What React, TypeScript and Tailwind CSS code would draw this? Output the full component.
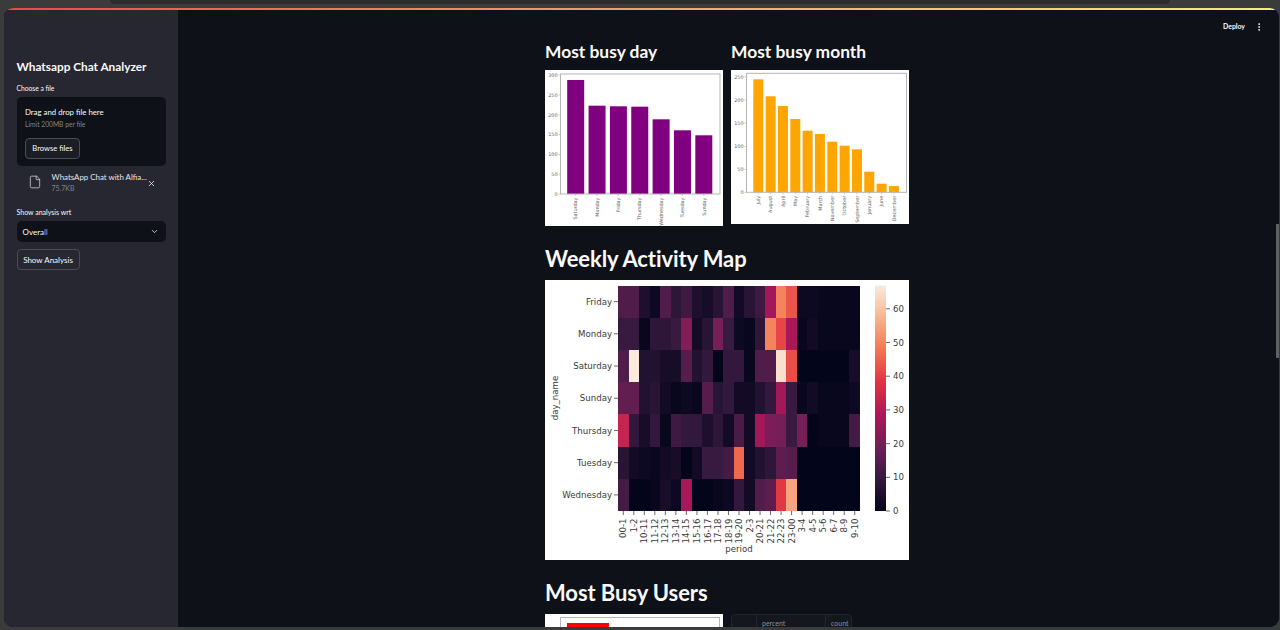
import React from 'react';
import { ChevronDown, EllipsisVertical, File, X } from 'lucide-react';

const UI_FONT = 'Lato, "Noto Sans", sans-serif';
const PLOT_FONT = '"DejaVu Sans", sans-serif';

// rocket colormap stops
const ROCKET = ['#03051a', '#35193e', '#701f57', '#ad1759', '#e13342', '#f37651', '#f6b48f', '#faebdd'];
const HEAT_MAX = 67;

const rocket = (value: number): string => {
  const t = Math.min(value / HEAT_MAX, 1) * (ROCKET.length - 1);
  const i = Math.min(Math.floor(t), ROCKET.length - 2);
  const f = t - i;
  const parse = (hex: string) => [1, 3, 5].map(p => parseInt(hex.slice(p, p + 2), 16));
  const a = parse(ROCKET[i]);
  const b = parse(ROCKET[i + 1]);
  return `rgb(${a.map((c, k) => Math.round(c + (b[k] - c) * f)).join(',')})`;
};

const DAYS = ['Friday', 'Monday', 'Saturday', 'Sunday', 'Thursday', 'Tuesday', 'Wednesday'];
const PERIODS = ['00-1', '1-2', '10-11', '11-12', '12-13', '13-14', '14-15', '15-16', '16-17', '17-18', '18-19', '19-20', '2-3', '20-21', '21-22', '22-23', '23-00', '3-4', '4-5', '5-6', '6-7', '8-9', '9-10'];
const HEAT = [
  [14, 14, 5, 2, 14, 8, 11, 5, 4, 7, 14, 3, 7, 11, 27, 50, 43, 2, 2, 1, 1, 1, 1],
  [10, 10, 1, 8, 8, 10, 22, 3, 7, 20, 10, 2, 1, 8, 50, 41, 28, 1, 3, 1, 1, 1, 1],
  [14, 67, 6, 6, 4, 4, 15, 6, 9, 0, 9, 9, 1, 14, 14, 65, 42, 0, 0, 0, 0, 0, 4],
  [17, 17, 6, 7, 3, 1, 2, 1, 15, 7, 9, 3, 3, 6, 9, 27, 10, 1, 3, 1, 1, 1, 2],
  [33, 9, 4, 9, 1, 11, 9, 9, 5, 8, 3, 13, 3, 27, 21, 20, 10, 20, 0, 1, 1, 1, 12],
  [7, 3, 2, 1, 3, 4, 0, 3, 10, 10, 12, 46, 3, 6, 8, 16, 15, 0, 0, 0, 0, 0, 0],
  [12, 0, 0, 1, 4, 2, 28, 0, 0, 1, 2, 9, 3, 14, 16, 39, 55, 0, 0, 0, 0, 0, 0],
];

interface Bar {
  label: string;
  top: number;
}

interface BarChartProps {
  width: number;
  height: number;
  color: string;
  axes: { left: number; right: number; top: number; bottom: number };
  ticks: { label: string; y: number }[];
  firstX: number;
  stepX: number;
  barWidth: number;
  bars: Bar[];
}

const BarChart: React.FC<BarChartProps> = ({ width, height, color, axes, ticks, firstX, stepX, barWidth, bars }) => (
  <svg width={width} height={height} className="block bg-white" style={{ fontFamily: PLOT_FONT }}>
    {bars.map((bar, i) => {
      const cx = firstX + stepX * i;
      return (
        <g key={bar.label}>
          <rect x={cx - barWidth / 2} y={bar.top} width={barWidth} height={axes.bottom - bar.top} fill={color} />
          <line x1={cx} x2={cx} y1={axes.bottom} y2={axes.bottom + 2} stroke="#999" strokeWidth={0.5} />
          <text
            transform={`translate(${cx + 1.7} ${axes.bottom + 3.5}) rotate(-90)`}
            textAnchor="end"
            fontSize={4.9}
            fill="#666"
          >
            {bar.label}
          </text>
        </g>
      );
    })}
    {ticks.map(t => (
      <g key={t.label}>
        <line x1={axes.left - 2} x2={axes.left} y1={t.y} y2={t.y} stroke="#999" strokeWidth={0.5} />
        <text x={axes.left - 3} y={t.y + 1.7} textAnchor="end" fontSize={4.9} fill="#666">
          {t.label}
        </text>
      </g>
    ))}
    <rect
      x={axes.left}
      y={axes.top}
      width={axes.right - axes.left}
      height={axes.bottom - axes.top}
      fill="none"
      stroke="#b5b5b5"
      strokeWidth={1}
    />
  </svg>
);

const DayChart = () => (
  <BarChart
    width={178}
    height={156}
    color="#800080"
    axes={{ left: 15.5, right: 175, top: 4, bottom: 124 }}
    ticks={[
      { label: '300', y: 5 },
      { label: '250', y: 25 },
      { label: '200', y: 45 },
      { label: '150', y: 64.5 },
      { label: '100', y: 84.5 },
      { label: '50', y: 104 },
      { label: '0', y: 124 },
    ]}
    firstX={30.7}
    stepX={21.35}
    barWidth={17}
    bars={[
      { label: 'Saturday', top: 10 },
      { label: 'Monday', top: 35.7 },
      { label: 'Friday', top: 36.3 },
      { label: 'Thursday', top: 36.7 },
      { label: 'Wednesday', top: 49.3 },
      { label: 'Tuesday', top: 60.3 },
      { label: 'Sunday', top: 65.3 },
    ]}
  />
);

const MonthChart = () => (
  <BarChart
    width={178}
    height={154}
    color="#ffa500"
    axes={{ left: 15.5, right: 175.5, top: 3.3, bottom: 122.3 }}
    ticks={[
      { label: '250', y: 7 },
      { label: '200', y: 30 },
      { label: '150', y: 53 },
      { label: '100', y: 76.5 },
      { label: '50', y: 99.5 },
      { label: '0', y: 122.3 },
    ]}
    firstX={27.3}
    stepX={12.33}
    barWidth={10}
    bars={[
      { label: 'July', top: 9.3 },
      { label: 'August', top: 26.3 },
      { label: 'April', top: 36 },
      { label: 'May', top: 49 },
      { label: 'February', top: 60.7 },
      { label: 'March', top: 64 },
      { label: 'November', top: 71.7 },
      { label: 'October', top: 75.7 },
      { label: 'September', top: 79.3 },
      { label: 'January', top: 101.7 },
      { label: 'June', top: 113.7 },
      { label: 'December', top: 116 },
    ]}
  />
);

const HeatMap = () => {
  const left = 73;
  const top = 5.5;
  const cellW = 242 / 23;
  const cellH = 225.5 / 7;
  const bottom = top + cellH * 7;
  const barLeft = 330;
  const tickY = (v: number) => bottom - v * 3.37;

  return (
    <svg width={364} height={280} className="block bg-white" style={{ fontFamily: PLOT_FONT }}>
      <defs>
        <linearGradient id="rocket" x1="0" y1="1" x2="0" y2="0">
          {ROCKET.map((c, i) => (
            <stop key={c} offset={i / (ROCKET.length - 1)} stopColor={c} />
          ))}
        </linearGradient>
      </defs>
      {HEAT.map((row, r) =>
        row.map((v, c) => (
          <rect
            key={`${r}-${c}`}
            x={left + c * cellW}
            y={top + r * cellH}
            width={cellW}
            height={cellH}
            fill={rocket(v)}
            shapeRendering="crispEdges"
          />
        ))
      )}
      {DAYS.map((d, r) => {
        const y = top + cellH * (r + 0.5);
        return (
          <g key={d}>
            <line x1={left - 4} x2={left} y1={y} y2={y} stroke="#444" strokeWidth={0.8} />
            <text x={left - 6} y={y + 3.1} textAnchor="end" fontSize={8.6} fill="#3a3a3a">
              {d}
            </text>
          </g>
        );
      })}
      {PERIODS.map((p, c) => {
        const x = left + cellW * (c + 0.5);
        return (
          <g key={p}>
            <line x1={x} x2={x} y1={bottom} y2={bottom + 4} stroke="#444" strokeWidth={0.8} />
            <text transform={`translate(${x + 3.1} ${bottom + 7.5}) rotate(-90)`} textAnchor="end" fontSize={8.6} fill="#3a3a3a">
              {p}
            </text>
          </g>
        );
      })}
      <text x={194} y={272} textAnchor="middle" fontSize={8.6} fill="#3a3a3a">
        period
      </text>
      <text transform="translate(13 118) rotate(-90)" textAnchor="middle" fontSize={8.6} fill="#3a3a3a">
        day_name
      </text>
      <rect x={barLeft} y={top} width={11} height={bottom - top} fill="url(#rocket)" />
      {[0, 10, 20, 30, 40, 50, 60].map(v => (
        <g key={v}>
          <line x1={barLeft + 11} x2={barLeft + 15} y1={tickY(v)} y2={tickY(v)} stroke="#444" strokeWidth={0.8} />
          <text x={barLeft + 18} y={tickY(v) + 3.1} fontSize={8.6} fill="#3a3a3a">
            {v}
          </text>
        </g>
      ))}
    </svg>
  );
};

const UsersPreview = () => (
  <div className="h-[40px] bg-white pt-[3px] pl-[15px] pr-[3px]">
    <div className="h-full border border-[#b5b5b5] pl-[6px] pt-[5px]">
      <div className="h-full w-[42px] bg-[#ff0000]" />
    </div>
  </div>
);

const UsersTable = () => (
  <div className="h-[40px] w-[121px] rounded-t-[4px] border border-[#22252d] bg-[#14171e] text-[7px] leading-none text-[#8b8f98]">
    <div className="flex h-[20px] border-b border-[#22252d]">
      <div className="h-full w-[25px] border-r border-[#22252d]" />
      <div className="h-full w-[69px] border-r border-[#22252d] pl-[5px] pt-[5px]">percent</div>
      <div className="pl-[5px] pt-[5px]">count</div>
    </div>
  </div>
);

const Heading: React.FC<{ children: React.ReactNode; small?: boolean }> = ({ children, small }) =>
  small ? (
    <h3 className="mb-[5px] flex h-[26px] items-center text-[17.4px] font-bold whitespace-nowrap text-[#fafafa]">
      {children}
    </h3>
  ) : (
    <h2 className="mb-[6px] flex h-[32px] items-center text-[22px] font-bold tracking-[-0.1px] whitespace-nowrap text-[#fafafa]">
      {children}
    </h2>
  );

const Sidebar = () => (
  <aside className="flex w-[174px] shrink-0 flex-col bg-[#262730] px-[12.5px] pt-[48px] text-[#fafafa]">
    <div className="flex h-[18px] items-center text-[11.8px] font-bold whitespace-nowrap">
      Whatsapp Chat Analyzer
    </div>
    <div className="mt-[7px] flex h-[10px] items-center text-[6.7px]">Choose a file</div>
    <div className="mt-[4px] h-[69px] rounded-[5px] bg-[#0e1117] px-[8.5px] pt-[11px]">
      <div className="flex h-[10px] items-center text-[7.8px] whitespace-nowrap">Drag and drop file here</div>
      <div className="mt-[2px] flex h-[9px] items-center text-[6.7px] text-[#80848f]">Limit 200MB per file</div>
      <div className="mt-[9px] flex h-[21px] w-[55px] items-center justify-center rounded-[4px] border border-[#4a4b54] bg-[#1b1d25] text-[7.6px]">
        Browse files
      </div>
    </div>
    <div className="mt-[1px] flex h-[30px] items-center pl-[11px]">
      <File size={14} strokeWidth={1.3} className="shrink-0 text-[#d8d8dc]" />
      <div className="ml-[10px] w-[93px]">
        <div className="h-[11px] text-[7.9px] leading-[11px] whitespace-nowrap text-[#e6e6e8]">WhatsApp Chat with Alfia...</div>
        <div className="h-[10px] text-[7px] leading-[10px] text-[#80848f]">75.7KB</div>
      </div>
      <X size={9} strokeWidth={2} className="ml-[2px] mt-[2px] shrink-0" />
    </div>
    <div className="mt-[10px] flex h-[10px] items-center text-[7px]">Show analysis wrt</div>
    <div className="mt-[4px] flex h-[21px] items-center justify-between rounded-[5px] bg-[#0e1117] pl-[6px] pr-[7px] text-[8px]">
      <span>
        Overa<span className="text-[#c79ad6]">ll</span>
      </span>
      <ChevronDown size={9} strokeWidth={2} />
    </div>
    <div className="mt-[7px] flex h-[21px] w-[63px] items-center justify-center rounded-[4px] border border-[#4a4b54] text-[8px]">
      Show Analysis
    </div>
  </aside>
);

export default function App() {
  return (
    <div className="flex h-[630px] w-[1280px] flex-col overflow-hidden bg-[#3b3b3b]" style={{ fontFamily: UI_FONT }}>
      <div className="mx-[110px] h-[4px] shrink-0 rounded-b-[5px] bg-[#2c2c2c]" />
      <div className="mt-[4px] ml-[4px] mr-[1px] flex h-[619px] flex-col overflow-hidden rounded-[9px] bg-[#0e1117]">
        <div className="h-[2px] shrink-0 bg-gradient-to-r from-[#e8494b] to-[#eef07c]" />
        <div className="flex min-h-0 flex-1">
          <Sidebar />
          <main className="relative min-w-0 flex-1 overflow-hidden">
            <div className="flex h-[29px] items-center justify-end pt-[4px] pr-[15px] text-[6.9px] font-bold text-[#fafafa]">
              <span>Deploy</span>
              <EllipsisVertical size={10} strokeWidth={2.2} className="ml-[9px]" />
            </div>
            <div className="flex justify-center pr-[3px]">
              <div className="w-[364px]">
                <div className="grid grid-cols-2 gap-x-2">
                  <div>
                    <Heading small>Most busy day</Heading>
                    <DayChart />
                  </div>
                  <div>
                    <Heading small>Most busy month</Heading>
                    <MonthChart />
                  </div>
                </div>
                <div className="mt-[16px]">
                  <Heading>Weekly Activity Map</Heading>
                  <HeatMap />
                </div>
                <div className="mt-[16px]">
                  <Heading>Most Busy Users</Heading>
                  <div className="grid grid-cols-2 gap-x-2">
                    <UsersPreview />
                    <UsersTable />
                  </div>
                </div>
              </div>
            </div>
            <div className="absolute top-[214px] right-0 h-[134px] w-[3px] bg-[#5f6064]" />
          </main>
        </div>
      </div>
    </div>
  );
}
